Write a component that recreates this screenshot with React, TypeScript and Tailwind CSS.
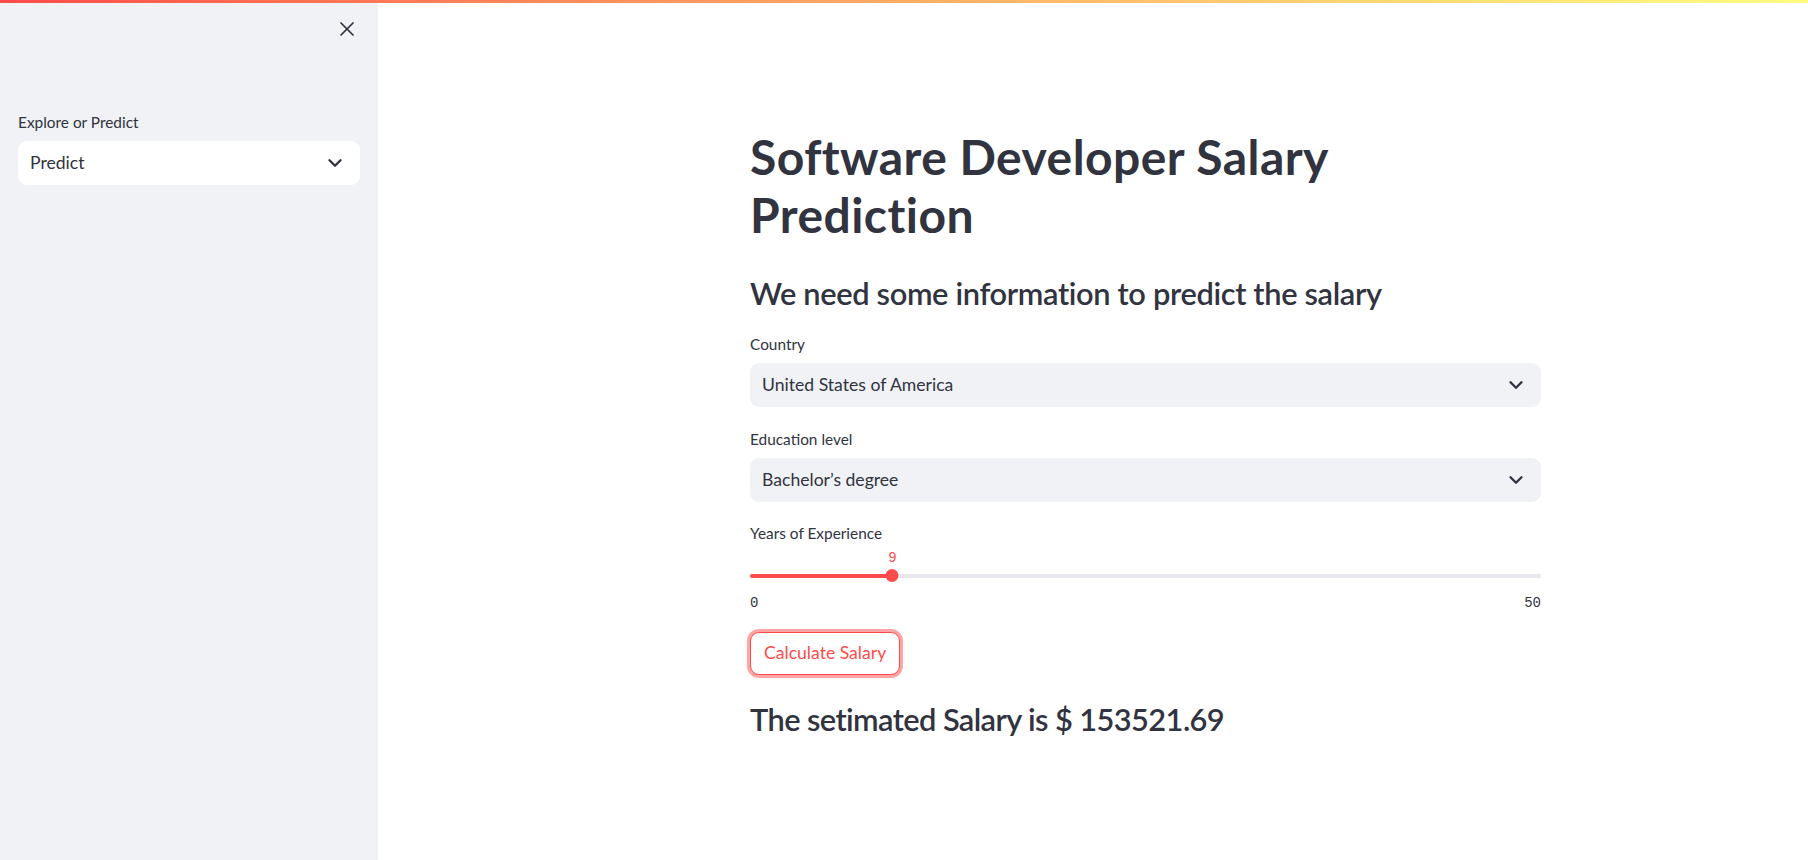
import { ChevronDown, X } from "lucide-react"

const font = { fontFamily: "Lato, 'Noto Sans', sans-serif" }

function SelectBox({ value, white }: { value: string; white?: boolean }) {
  return (
    <div
      className={`flex h-[44px] items-center justify-between rounded-[9px] pl-[12px] pr-[14px] text-[17.6px] text-[#31333f] ${
        white ? "bg-white" : "bg-[#f0f2f6]"
      }`}
    >
      <span>{value}</span>
      <ChevronDown size={22} strokeWidth={2.6} className="text-[#31333f]" />
    </div>
  )
}

function Label({ children }: { children: string }) {
  return <div className="text-[15.4px] leading-[23px] text-[#31333f]">{children}</div>
}

export default function App() {
  const years = 9
  const pct = (years / 50) * 100

  return (
    <div style={font} className="relative flex h-[860px] w-full overflow-hidden bg-white text-[#31333f]">
      {/* streamlit header decoration */}
      <div className="absolute left-0 right-0 top-0 z-10 h-[2.5px] bg-gradient-to-r from-[#ff4b4b] to-[#fffd80]" />

      <aside className="flex w-[378px] shrink-0 flex-col bg-[#f0f2f6] px-[18px]">
        <div className="flex justify-end pt-[17px] pr-[1px]">
          <X size={24} strokeWidth={1.7} className="text-[#31333f]" />
        </div>
        <div className="mt-[70px]">
          <Label>Explore or Predict</Label>
        </div>
        <div className="mt-[7px]">
          <SelectBox value="Predict" white />
        </div>
      </aside>

      <main className="flex-1 pl-[372px] pt-[128px]">
        <div className="flex w-[791px] flex-col">
          <h1 className="text-[48px] font-bold leading-[58px] tracking-[0.45px]">
            Software Developer Salary
            <br />
            Prediction
          </h1>
          <h3 className="mt-[31px] text-[30.8px] font-semibold leading-[37px] tracking-[-0.35px]">
            We need some information to predict the salary
          </h3>

          <div className="mt-[21px]">
            <Label>Country</Label>
          </div>
          <div className="mt-[7px]">
            <SelectBox value="United States of America" />
          </div>

          <div className="mt-[21px]">
            <Label>Education level</Label>
          </div>
          <div className="mt-[7px]">
            <SelectBox value="Bachelor’s degree" />
          </div>

          <div className="mt-[20px]">
            <Label>Years of Experience</Label>
          </div>
          <div className="flex flex-col font-['Liberation_Mono',monospace] text-[14px]">
            <div className="relative h-[23.5px]">
              <span
                className="absolute top-[3px] -translate-x-1/2 text-[#ff4b4b]"
                style={{ left: `${pct}%` }}
              >
                {years}
              </span>
            </div>
            <div className="relative h-[14px]">
              <div className="absolute left-0 right-0 top-[5px] h-[4px] rounded-full bg-[#e6e8ee]" />
              <div
                className="absolute left-0 top-[5px] h-[4px] rounded-full bg-[#ff4b4b]"
                style={{ width: `${pct}%` }}
              />
              <div
                className="absolute top-[0.5px] h-[13px] w-[13px] -translate-x-1/2 rounded-full bg-[#ff4b4b]"
                style={{ left: `${pct}%` }}
              />
            </div>
            <div className="mt-[10px] flex justify-between leading-[20px] text-[#31333f]">
              <span>0</span>
              <span>50</span>
            </div>
          </div>

          <div className="mt-[19px] flex">
            <button className="h-[43px] rounded-[9px] border border-[#ff4b4b] bg-white px-[13px] text-[17.6px] text-[#ff4b4b] shadow-[0_0_0_3px_rgba(255,75,75,0.5)]">
              Calculate Salary
            </button>
          </div>

          <h3 className="mt-[26px] text-[30.8px] font-semibold leading-[37px] tracking-[-0.6px]">
            The setimated Salary is $ 153521.69
          </h3>
        </div>
      </main>
    </div>
  )
}
